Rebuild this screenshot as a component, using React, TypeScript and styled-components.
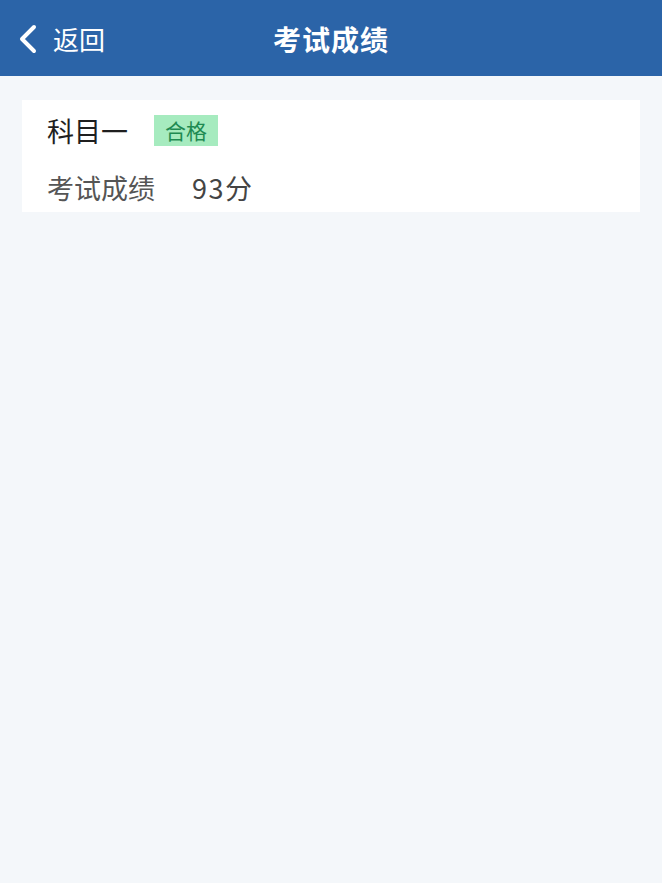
import React from "react";
import styled, { createGlobalStyle } from "styled-components";

const Global = createGlobalStyle`
  html, body { margin: 0; padding: 0; background: #f4f7fa; }
  body { font-family: "Noto Sans CJK SC", "Noto Sans", sans-serif; }
`;

const Page = styled.div`
  min-height: 883px;
  background: #f4f7fa;
`;

const Header = styled.header`
  height: 76px;
  background: #2b64a8;
  display: grid;
  grid-template-columns: 1fr auto 1fr;
  align-items: center;
  color: #fff;
`;

const Back = styled.div`
  display: flex;
  align-items: center;
  gap: 14px;
  padding-left: 17px;
  padding-top: 2px;
  font-size: 26px;
  line-height: 1;
`;

const Title = styled.h1`
  margin: 0;
  font-size: 28px;
  line-height: 1;
  font-weight: 700;
  padding-top: 2px;
  letter-spacing: 1px;
`;

const Content = styled.main`
  padding: 24px 22px 0 22px;
`;

const Card = styled.section`
  background: #ffffff;
  height: 112px;
  box-sizing: border-box;
  padding: 14px 25px 0 25px;
  display: flex;
  flex-direction: column;
  gap: 25px;
`;

const Row = styled.div`
  display: flex;
  align-items: center;
  height: 32px;
`;

const Subject = styled.span`
  font-size: 27px;
  line-height: 1;
  color: #1f1f1f;
  width: 107px;
`;

const Badge = styled.span`
  background: #a6ebbf;
  color: #1e8a52;
  font-size: 21px;
  height: 31px;
  line-height: 31px;
  padding: 0 11px;
`;

const Label = styled.span`
  font-size: 27px;
  line-height: 1;
  color: #555555;
  width: 145px;
`;

const Value = styled.span`
  font-size: 27px;
  line-height: 1;
  color: #444444;
  letter-spacing: 1.5px;
`;

export default function App() {
  return (
    <Page>
      <Global />
      <Header>
        <Back>
          <svg width="22" height="30" viewBox="0 0 22 30">
            <path d="M17 3 L5 15 L17 27" fill="none" stroke="#fff" strokeWidth="4" strokeLinecap="round" strokeLinejoin="round" />
          </svg>
          <span>返回</span>
        </Back>
        <Title>考试成绩</Title>
        <div />
      </Header>
      <Content>
        <Card>
          <Row>
            <Subject>科目一</Subject>
            <Badge>合格</Badge>
          </Row>
          <Row>
            <Label>考试成绩</Label>
            <Value>93分</Value>
          </Row>
        </Card>
      </Content>
    </Page>
  );
}
